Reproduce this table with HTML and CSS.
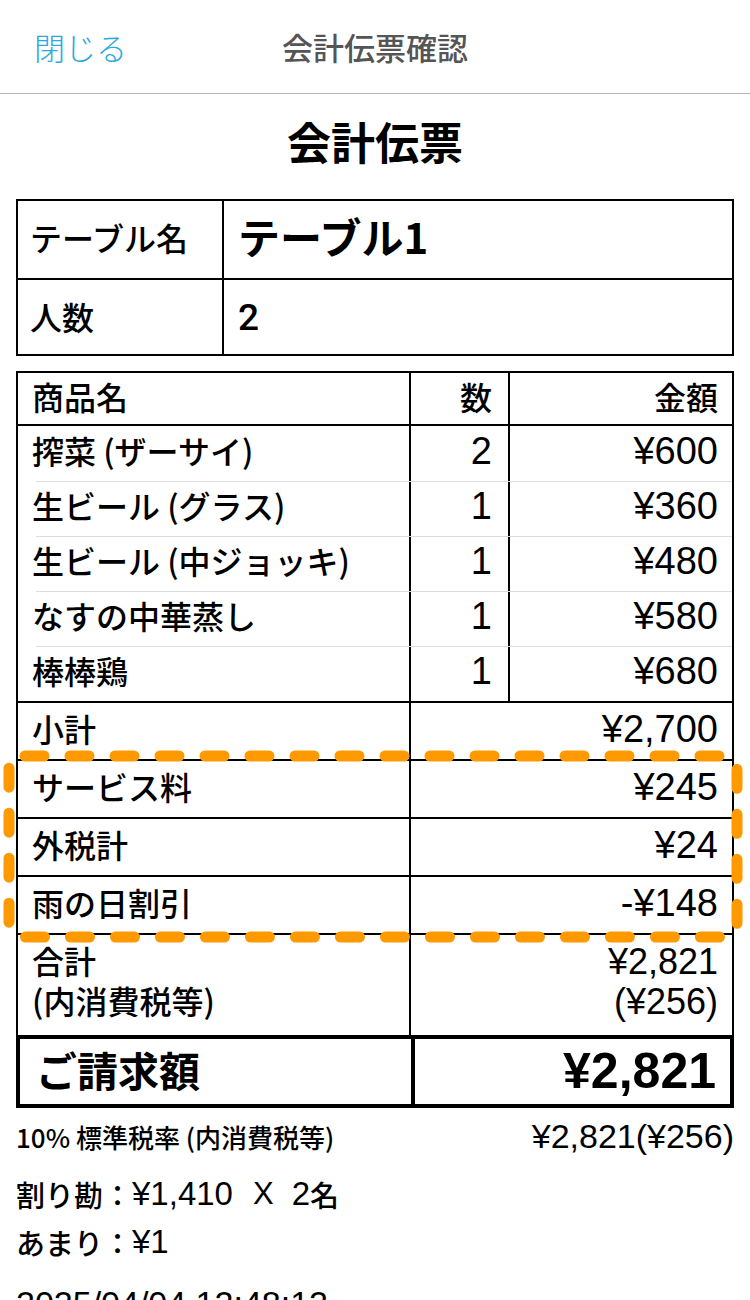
FILE: index.html
```html
<!DOCTYPE html>
<html lang="ja">
<head>
<meta charset="utf-8">
<link rel="stylesheet" href="styles.css">
</head>
<body>
<header class="nav">
  <span class="nav-close">閉じる</span>
  <span class="nav-title">会計伝票確認</span>
  <span class="nav-spacer"></span>
</header>
<main class="page">
  <h1 class="doc-title">会計伝票</h1>

  <section class="info">
    <div class="info-row">
      <div class="info-label">テーブル名</div>
      <div class="info-value info-value-big">テーブル1</div>
    </div>
    <div class="info-row">
      <div class="info-label">人数</div>
      <div class="info-value">2</div>
    </div>
  </section>

  <section class="bill">
    <div class="items">
      <div class="item-row item-head">
        <div class="c-name">商品名</div>
        <div class="c-qty">数</div>
        <div class="c-amt">金額</div>
      </div>
      <div class="item-row">
        <div class="c-name">搾菜 (ザーサイ)</div>
        <div class="c-qty">2</div>
        <div class="c-amt">¥600</div>
      </div>
      <div class="item-row">
        <div class="c-name">生ビール (グラス)</div>
        <div class="c-qty">1</div>
        <div class="c-amt">¥360</div>
      </div>
      <div class="item-row">
        <div class="c-name">生ビール (中ジョッキ)</div>
        <div class="c-qty">1</div>
        <div class="c-amt">¥480</div>
      </div>
      <div class="item-row">
        <div class="c-name">なすの中華蒸し</div>
        <div class="c-qty">1</div>
        <div class="c-amt">¥580</div>
      </div>
      <div class="item-row">
        <div class="c-name">棒棒鶏</div>
        <div class="c-qty">1</div>
        <div class="c-amt">¥680</div>
      </div>
    </div>

    <div class="sum-row">
      <div class="s-label">小計</div>
      <div class="s-val">¥2,700</div>
    </div>
    <div class="highlight">
      <div class="sum-row">
        <div class="s-label">サービス料</div>
        <div class="s-val">¥245</div>
      </div>
      <div class="sum-row">
        <div class="s-label">外税計</div>
        <div class="s-val">¥24</div>
      </div>
      <div class="sum-row">
        <div class="s-label">雨の日割引</div>
        <div class="s-val">-¥148</div>
      </div>
      <svg class="highlight-frame" width="742" height="194" viewBox="0 0 742 194" aria-hidden="true">
        <rect x="6" y="6" width="728" height="181" rx="12" ry="12" fill="none" stroke="#ff9900" stroke-width="11" stroke-linecap="round" stroke-dasharray="19 26" stroke-dashoffset="-4"/>
      </svg>
    </div>
    <div class="sum-row sum-total">
      <div class="s-label">合計<br>(内消費税等)</div>
      <div class="s-val">¥2,821<br>(¥256)</div>
    </div>
  </section>
  <div class="grand">
    <div class="g-label">ご請求額</div>
    <div class="g-val">¥2,821</div>
  </div>

  <div class="tax-line">
    <span class="tax-label">10% 標準税率 (内消費税等)</span>
    <span class="tax-val">¥2,821(¥256)</span>
  </div>
  <p class="split"><span>割り勘：</span><span class="num">¥1,410</span><span class="times">X</span><span class="num">2</span><span>名</span></p>
  <p class="split rest"><span>あまり：</span><span class="num">¥1</span></p>
  <p class="stamp">2025/04/04 12:48:12</p>
</main>
</body>
</html>
```

FILE: styles.css
```css
* { box-sizing: border-box; }
html, body { margin: 0; padding: 0; background: #fff; }
body {
  font-family: "Liberation Sans", "Noto Sans CJK JP", sans-serif;
  color: #000;
  width: 750px;
  overflow: hidden;
}

.nav {
  height: 94px;
  border-bottom: 1px solid #b4b4b4;
  display: grid;
  grid-template-columns: 1fr auto 1fr;
  align-items: center;
  padding: 0 0 0 34px;
}
.nav-close {
  font-size: 31px;
  color: #2aa9e0;
  font-weight: 300;
  font-family: "Noto Sans CJK JP", sans-serif;
}
.nav-title {
  font-size: 31px;
  color: #555;
  font-weight: 500;
  font-family: "Noto Sans CJK JP", sans-serif;
  margin-left: -34px;
}

.page { padding: 0 16px; }

.doc-title {
  margin: 0;
  height: 105px;
  display: flex;
  align-items: center;
  justify-content: center;
  font-size: 44px;
  font-weight: 700;
  font-family: "Noto Sans CJK JP", sans-serif;
  padding-bottom: 12px;
}

.info {
  border: 2px solid #000;
}
.info-row {
  display: grid;
  grid-template-columns: 206px 1fr;
  height: 77px;
}
.info-row + .info-row { border-top: 2px solid #000; height: 76px; }
.info-label {
  border-right: 2px solid #000;
  display: flex;
  align-items: center;
  padding: 0 0 6px 12px;
  font-size: 32px;
  font-weight: 500;
  font-family: "Noto Sans CJK JP", sans-serif;
}
.info-row + .info-row .info-label { padding-bottom: 3px; }
.info-value {
  display: flex;
  align-items: center;
  padding-left: 14px;
  font-size: 37px;
  font-family: "Roboto", "Noto Sans CJK JP", sans-serif;
  font-weight: 500;
}
.info-value-big {
  font-size: 42px;
  font-weight: 700;
  font-family: "Noto Sans CJK JP", sans-serif;
  padding-bottom: 8px;
}

.bill {
  margin-top: 15px;
  border: 2px solid #000;
  border-bottom: none;
}
.item-row {
  display: grid;
  grid-template-columns: 393px 99px 1fr;
  height: 55px;
  position: relative;
  font-size: 32px;
  font-weight: 500;
}
.item-row + .item-row::before {
  content: "";
  position: absolute;
  top: 0;
  left: 18px;
  right: 0;
  height: 1px;
  background: #dcdcdc;
}
.item-head {
  height: 53px;
  border-bottom: 2px solid #000;
}
.item-head + .item-row::before { display: none; }
.c-name {
  display: flex;
  align-items: center;
  padding: 0 0 7px 14px;
  border-right: 2px solid #000;
  white-space: nowrap;
  font-family: "Noto Sans CJK JP", sans-serif;
}
.c-qty {
  display: flex;
  align-items: center;
  justify-content: flex-end;
  padding: 0 16px 4px 0;
  border-right: 2px solid #000;
}
.c-amt {
  display: flex;
  align-items: center;
  justify-content: flex-end;
  padding: 0 14px 4px 0;
}
.item-row .c-qty, .item-row .c-amt { font-weight: 400; font-size: 38px; }
.item-head .c-qty, .item-head .c-amt {
  font-weight: 500;
  font-size: 32px;
  font-family: "Noto Sans CJK JP", sans-serif;
  padding-bottom: 7px;
}

.sum-row {
  display: grid;
  grid-template-columns: 393px 1fr;
  height: 58px;
  border-top: 2px solid #000;
  font-size: 32px;
}
.s-label {
  display: flex;
  align-items: center;
  padding: 0 0 7px 14px;
  border-right: 2px solid #000;
  font-weight: 500;
  font-family: "Noto Sans CJK JP", sans-serif;
}
.s-val {
  display: flex;
  align-items: center;
  justify-content: flex-end;
  padding: 0 14px 4px 0;
  font-size: 38px;
  text-align: right;
}
.highlight { position: relative; }
.highlight-frame {
  position: absolute;
  left: -15px;
  top: -9px;
  pointer-events: none;
}
.sum-total {
  height: 102px;
  line-height: 40px;
}
.sum-total .s-label { font-size: 32px; padding-bottom: 10px; }
.sum-total .s-val { font-size: 36px; padding-bottom: 6px; }

.grand {
  display: grid;
  grid-template-columns: 395px 1fr;
  height: 73px;
  border: 4px solid #000;
}
.g-label {
  display: flex;
  align-items: center;
  padding: 0 0 9px 16px;
  border-right: 4px solid #000;
  font-size: 41px;
  font-weight: 700;
  font-family: "Noto Sans CJK JP", sans-serif;
}
.g-val {
  display: flex;
  align-items: center;
  justify-content: flex-end;
  padding: 0 14px 5px 0;
  font-size: 50px;
  font-weight: 700;
}

.tax-line {
  display: flex;
  justify-content: space-between;
  align-items: center;
  height: 62px;
  padding-bottom: 6px;
}
.tax-label {
  font-size: 26px;
  font-weight: 500;
  font-family: "Noto Sans CJK JP", sans-serif;
}
.tax-val { font-size: 34px; }

.split {
  margin: 0;
  font-size: 29px;
  font-weight: 500;
  height: 48px;
  display: flex;
  align-items: center;
  font-family: "Noto Sans CJK JP", sans-serif;
}
.split .num {
  font-family: "Liberation Sans", sans-serif;
  font-weight: 400;
  font-size: 33px;
}
.split .times {
  font-family: "Liberation Sans", sans-serif;
  font-weight: 400;
  font-size: 31px;
  margin: 0 18px 0 20px;
}
.rest { margin-top: 0; }
.stamp {
  margin: 18px 0 0;
  font-size: 34px;
  font-weight: 400;
}
```
